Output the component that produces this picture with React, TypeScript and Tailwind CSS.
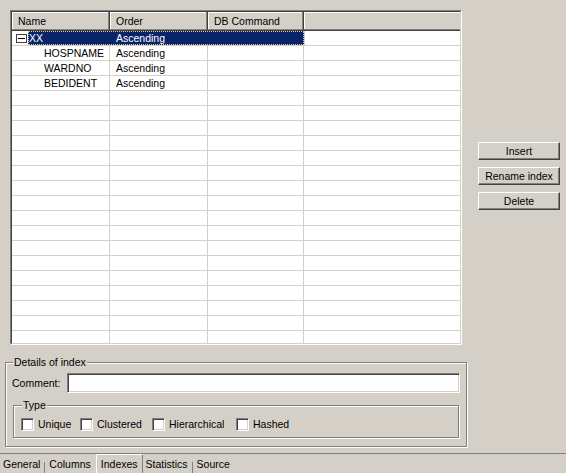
import React from 'react';

const rows = [
  { name: 'HOSPNAME', order: 'Ascending' },
  { name: 'WARDNO', order: 'Ascending' },
  { name: 'BEDIDENT', order: 'Ascending' },
];

function HeaderCell({ label, w }: { label: string; w: string }) {
  return (
    <div
      className={`${w} h-full flex items-center pl-[6px] pt-[1px] border-r border-b border-[#404040] shadow-[inset_-1px_-1px_0_#808080,inset_1px_1px_0_#fff]`}
    >
      {label}
    </div>
  );
}

function Button({ label }: { label: string }) {
  return (
    <button className="w-[82px] h-[18px] flex items-center justify-center border-t border-l border-white border-r border-b border-r-[#404040] border-b-[#404040] shadow-[inset_-1px_-1px_0_#808080] bg-[#d4d0c8] text-black">
      {label}
    </button>
  );
}

function Check({ label, w }: { label: string; w: string }) {
  return (
    <div className={`${w} flex items-center`}>
      <span className="w-[13px] h-[13px] bg-white border-t border-l border-[#808080] border-r border-b border-r-white border-b-white shadow-[inset_1px_1px_0_#404040,inset_-1px_-1px_0_#d4d0c8]" />
      <span className="ml-[4px] pt-[1px]">{label}</span>
    </div>
  );
}

export default function App() {
  const empty = Array.from({ length: 18 });
  return (
    <div className="w-[566px] h-[473px] bg-[#d4d0c8] flex flex-col overflow-hidden text-[10.5px] leading-[13px] text-black font-['Liberation_Sans',Arial,sans-serif]">
      <div className="flex pt-[10px] pl-[10px]">
        {/* index grid */}
        <div className="w-[452px] h-[335px] border-t border-l border-[#808080] border-r border-b border-r-white border-b-white">
          <div className="h-full flex flex-col bg-white overflow-hidden border-t border-l border-[#404040] border-r border-b border-r-[#d4d0c8] border-b-[#d4d0c8]">
            <div className="flex h-[19px] shrink-0 bg-[#d4d0c8]">
              <HeaderCell label="Name" w="w-[98px]" />
              <HeaderCell label="Order" w="w-[98px]" />
              <HeaderCell label="DB Command" w="w-[96px]" />
              <div className="flex-1 h-full border-b border-[#404040] shadow-[inset_0_-1px_0_#808080,inset_1px_1px_0_#fff]" />
            </div>

            <div className="flex h-[15px] shrink-0 border-b border-[#d4d0c8]">
              <div className="w-[16px] flex items-center pl-[4px] pt-[1px]">
                <div className="w-[11px] h-[9px] border border-[#404040] flex items-center justify-center bg-white">
                  <div className="w-[7px] h-px bg-black" />
                </div>
              </div>
              <div className="w-[276px] flex bg-[#0a246a] text-white outline-dotted outline-1 -outline-offset-1 outline-[#d8cc88]">
                <div className="w-[82px] pl-[1px] pt-[1px] flex items-center">XX</div>
                <div className="w-[98px] pl-[6px] pt-[1px] flex items-center">Ascending</div>
              </div>
              <div className="flex-1 border-l border-[#d4d0c8]" />
            </div>

            {rows.map((r) => (
              <div key={r.name} className="flex h-[15px] shrink-0 border-b border-[#d4d0c8]">
                <div className="w-[98px] pl-[32px] pt-[1px] flex items-center border-r border-[#d4d0c8]">{r.name}</div>
                <div className="w-[98px] pl-[6px] pt-[1px] flex items-center border-r border-[#d4d0c8]">{r.order}</div>
                <div className="w-[96px] border-r border-[#d4d0c8]" />
                <div className="flex-1" />
              </div>
            ))}

            {empty.map((_, i) => (
              <div key={i} className="flex h-[15px] shrink-0 border-b border-[#d4d0c8]">
                <div className="w-[98px] border-r border-[#d4d0c8]" />
                <div className="w-[98px] border-r border-[#d4d0c8]" />
                <div className="w-[96px] border-r border-[#d4d0c8]" />
                <div className="flex-1" />
              </div>
            ))}
          </div>
        </div>

        <div className="ml-[16px] mt-[132px] flex flex-col gap-[7px]">
          <Button label="Insert" />
          <Button label="Rename index" />
          <Button label="Delete" />
        </div>
      </div>

      {/* details of index */}
      <div className="ml-[5px] mt-[17px] w-[462px] h-[85px] flex flex-col border border-[#808080] shadow-[1px_1px_0_#fff,inset_1px_1px_0_#fff] pl-[6px]">
        <span className="-mt-[7px] ml-[1px] w-fit px-[1px] bg-[#d4d0c8]">Details of index</span>
        <div className="mt-[4px] flex h-[20px] items-center">
          <span className="w-[55px]">Comment:</span>
          <div className="w-[393px] h-[20px] bg-white border-t border-l border-[#808080] border-r border-b border-r-white border-b-white shadow-[inset_1px_1px_0_#404040,inset_-1px_-1px_0_#d4d0c8]" />
        </div>
        <div className="mt-[12px] ml-[1px] w-[446px] h-[33px] flex flex-col border border-[#808080] shadow-[1px_1px_0_#fff,inset_1px_1px_0_#fff] pl-[7px]">
          <span className="-mt-[7px] ml-[1px] w-fit px-[1px] bg-[#d4d0c8]">Type</span>
          <div className="mt-[5px] flex">
            <Check label="Unique" w="w-[59px]" />
            <Check label="Clustered" w="w-[72px]" />
            <Check label="Hierarchical" w="w-[84px]" />
            <Check label="Hashed" w="w-[70px]" />
          </div>
        </div>
      </div>

      {/* tabs */}
      <div className="mt-[6px] flex-1 flex border-t border-[#808080] pl-[3px]">
        <span className="flex items-center pt-[1px]">General</span>
        <span className="self-end w-px h-[11px] bg-[#808080] mx-[4px]" />
        <span className="flex items-center pt-[1px]">Columns</span>
        <span className="ml-[5px] px-[4px] pt-[1px] flex items-center border-l border-white border-r border-r-[#808080] border-t">Indexes</span>
        <span className="ml-[3px] flex items-center pt-[1px]">Statistics</span>
        <span className="self-end w-px h-[11px] bg-[#808080] mx-[4px]" />
        <span className="flex items-center pt-[1px]">Source</span>
      </div>
    </div>
  );
}
